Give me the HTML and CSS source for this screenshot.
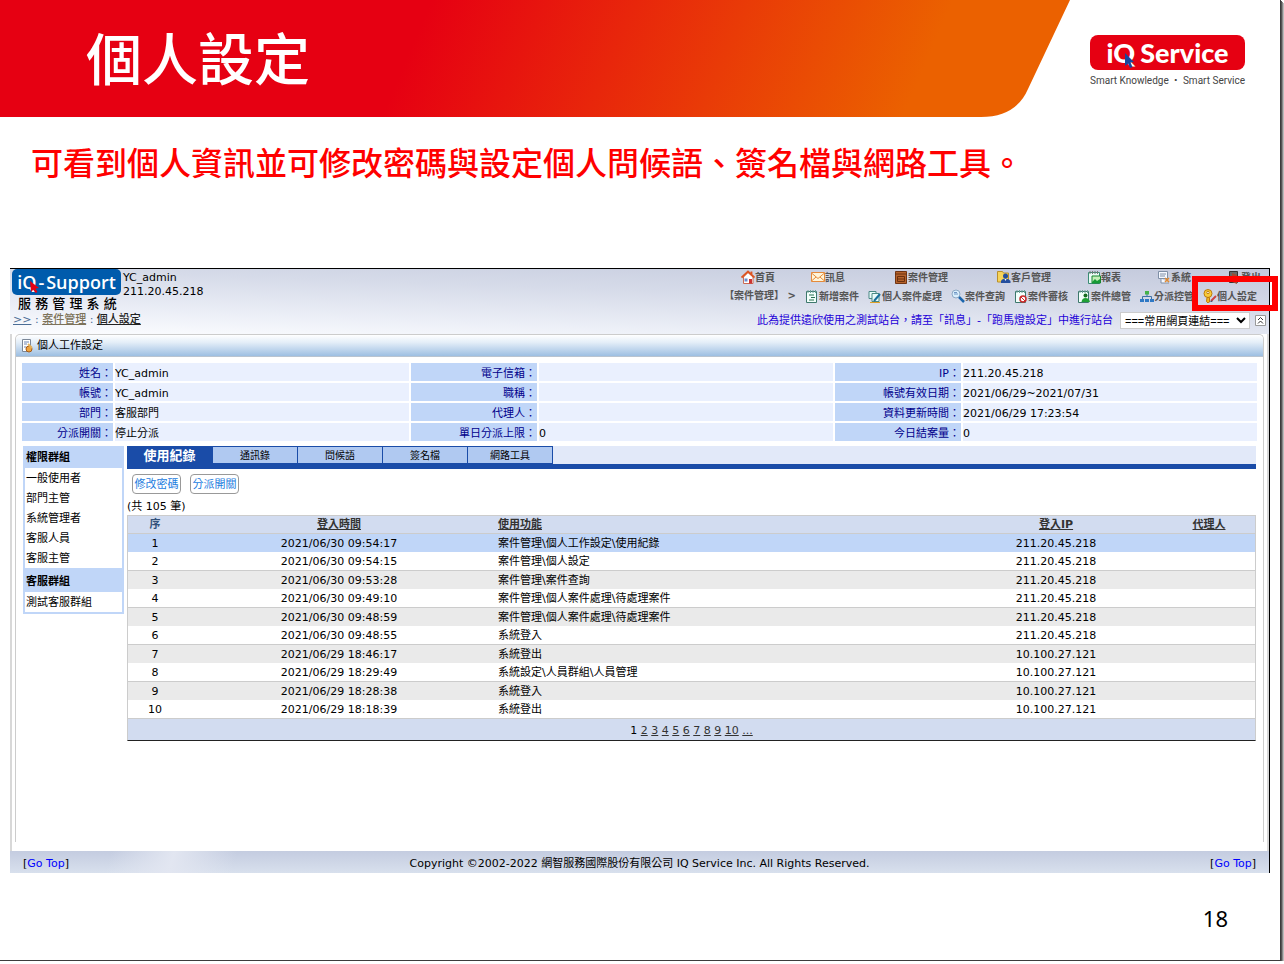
FILE: index.html
```html
<!DOCTYPE html>
<html lang="zh-Hant">
<head>
<meta charset="utf-8">
<meta name="viewport" content="width=device-width, initial-scale=1">
<title>個人設定</title>
<link rel="stylesheet" href="styles.css">
</head>
<body>
<main class="slide">
  <header class="slide-header">
    <div class="banner">
      <svg class="banner-shape" viewBox="0 0 1070 117" preserveAspectRatio="none" aria-hidden="true">
        <defs>
          <linearGradient id="bannerFill" gradientUnits="userSpaceOnUse" x1="410" y1="50" x2="850" y2="240">
            <stop offset="0" stop-color="#e60012"/>
            <stop offset="1" stop-color="#eb6100"/>
          </linearGradient>
        </defs>
        <path d="M0 0H1070L1028 89Q1016 117 981 117H0Z" fill="url(#bannerFill)"/>
      </svg>
      <h1 class="title">個人設定</h1>
    </div>
    <div class="brand">
      <div class="brand-mark">
        <span>iQ</span><span>Service</span>
        <svg class="brand-cursor" viewBox="0 0 9 15" aria-hidden="true"><path d="M0 0L9 9L5.500 9.500L7.500 14L5 15L3.200 10.500L0 13Z" fill="#17479e"/></svg>
      </div>
      <div class="brand-tag"><span>Smart Knowledge</span><span>・</span><span>Smart Service</span></div>
    </div>
  </header>

  <p class="lead">可看到個人資訊並可修改密碼與設定個人問候語、簽名檔與網路工具。</p>

  <section class="app">
    <header class="app-header">
      <div class="identity">
        <div class="app-logo-row">
          <div class="app-logo">
            <span>iQ</span><span>-</span><span>Support</span>
            <svg class="logo-cursor" viewBox="0 0 9 12" aria-hidden="true"><path d="M0 0L9 7L5.500 7.500L7.500 11L5.500 12L3.500 8.500L1 11Z" fill="#e60012"/></svg>
          </div>
          <div class="user"><div>YC_admin</div><div>211.20.45.218</div></div>
        </div>
        <div class="system-name">服 務 管 理 系 統</div>
        <nav class="crumbs"><a href="#">&gt;&gt;</a> : <a class="crumb-mid" href="#">案件管理</a> : <a class="crumb-here" href="#">個人設定</a></nav>
      </div>

      <div class="menus">
        <nav class="menu menu-main">
          <a href="#"><svg viewBox="0 0 14 14"><path d="M2.500 7V13.500H12V7L7 2.500Z" fill="#fff" stroke="#c96b55"/><path d="M.5 7.500L7 1.500L13.500 7.500M10.500 1.500V4" fill="none" stroke="#dd5522" stroke-width="1.800"/><path d="M8 9h3v4.500H8z" fill="#c33"/><path d="M3.500 8.500h3v3h-3z" fill="#678ed0"/></svg>首頁</a>
          <a href="#"><svg viewBox="0 0 14 14"><path d="M.5 2.500h13v9H.5z" fill="#fff4d8" stroke="#e58a3c"/><path d="M.5 3L7 8.500L13.500 3M.5 11L5 7M13.500 11L9 7" fill="none" stroke="#e58a3c"/></svg>訊息</a>
          <a class="wide" href="#"><svg viewBox="0 0 14 14"><path d="M1.500 1.500h11v12h-11z" fill="#b5622b" stroke="#713513"/><path d="M1 4h12M3.500 6.500h7v5h-7zM3.500 9h7M6 1.500h3" fill="none" stroke="#6b300e"/></svg>案件管理</a>
          <a class="wide" href="#"><svg viewBox="0 0 14 14"><path d="M.5 1.500h5l1 1.500h5v9H.5z" fill="#f6d45a" stroke="#ba902a"/><circle cx="8.500" cy="6" r="2.500" fill="#244f9e"/><path d="M4 13v-2q1-2.500 4.500-2.500t5 2.500v2z" fill="#244f9e"/><path d="M7.500 9l1 2 1-2z" fill="#fff"/></svg>客戶管理</a>
          <a href="#"><svg viewBox="0 0 14 14"><path d="M1.500 2.500h11v11h-11z" fill="#e9fbf4" stroke="#3a8c74"/><path d="M3 1v3M5.500 1v3M8 1v3M10.500 1v3" stroke="#777"/><path d="M5 6h8.500v7H5z" fill="#c4efb8" stroke="#16852e"/><path d="M5 12l3-3 2 2 3-2v4H5z" fill="#169b36"/></svg>報表</a>
          <a href="#"><svg viewBox="0 0 14 14"><path d="M1.500 1.500h9v7h-9zM4 8.500V13h8M3 4h6M3 6h5" fill="#f5f8ff" stroke="#7f8fa6"/><path d="M8 8l4 4M12 8l-4 4" stroke="#e28b30" stroke-width="1.500"/></svg>系統</a>
          <a href="#"><svg viewBox="0 0 14 14"><path d="M2.500 1.500h8v11h-8z" fill="#666" stroke="#333"/><path d="M5 3l5 2v9l-5-2z" fill="#a04b35"/><path d="M10 8h3" stroke="#333" stroke-width="2"/></svg>登出</a>
        </nav>
        <nav class="menu menu-sub">
          <span class="section-name">【案件管理】 &gt;</span>
          <a href="#"><svg viewBox="0 0 14 14"><path d="M1.500 2.500h10v11h-10z" fill="#f3fffb" stroke="#3d786c"/><path d="M3 1v3M5.500 1v3M8 1v3M10.500 1v3" stroke="#6e9f98"/><path d="M4 6h5M6 8.500h4M4 11h5" stroke="#287050"/></svg>新增案件</a>
          <a href="#"><svg viewBox="0 0 14 14"><path d="M1 2.500h7v7H1z" fill="#e9fbfa" stroke="#4a8984"/><path d="M4 4.500h7v8H4z" fill="#e9fbfa" stroke="#4a8984"/><path d="M6 12l6-7" stroke="#176f9b" stroke-width="2"/><path d="M2 13.500h10" stroke="#e0a028"/></svg>個人案件處理</a>
          <a href="#"><svg viewBox="0 0 14 14"><circle cx="5" cy="5" r="4" fill="#d9eefc" stroke="#8da9c4"/><path d="M3 5h4M3 3.500h3" stroke="#6f96c4"/><path d="M8 8l5 5" stroke="#1c66ad" stroke-width="2.500"/></svg>案件查詢</a>
          <a href="#"><svg viewBox="0 0 14 14"><path d="M1.500 2.500h10v11h-10z" fill="#f3fffb" stroke="#3d786c"/><path d="M3 1v3M5.500 1v3M8 1v3M10.500 1v3" stroke="#6e9f98"/><circle cx="9" cy="10" r="3" fill="#fff" stroke="#c92a2a" stroke-width="1.500"/><path d="M7 8l4 4" stroke="#c92a2a"/></svg>案件審核</a>
          <a href="#"><svg viewBox="0 0 14 14"><path d="M1.500 2.500h10v11h-10z" fill="#f3fffb" stroke="#3d786c"/><path d="M3 1v3M5.500 1v3M8 1v3M10.500 1v3" stroke="#6e9f98"/><circle cx="8.500" cy="6.500" r="2" fill="#176b20"/><path d="M4.500 13q.5-4 4-4t4.500 4z" fill="#20a035"/></svg>案件總管</a>
          <a href="#"><svg viewBox="0 0 14 14"><path d="M7 5v3M2.500 10V7.500h9V10" fill="none" stroke="#3f73a5"/><path d="M5 2h4v3.500H5z" fill="#45b248"/><path d="M0 10h4v3H0zM5 10h4v3H5zM10 10h4v3h-4z" fill="#2f79c5"/></svg>分派控管</a>
          <a class="marked" href="#"><svg viewBox="0 0 14 14"><circle cx="5" cy="4.500" r="4" fill="#f8cc38" stroke="#bd7a0c"/><circle cx="5" cy="3.500" r="1.200" fill="#fff" stroke="#bd7a0c"/><path d="M4 8.500h2.500V13l-1.500 1-1.500-1.500z" fill="#f3b720" stroke="#bd7a0c"/><path d="M8 12l5-5" stroke="#c44" stroke-width="2"/><path d="M7.500 12.500l2-.5" stroke="#246"/></svg>個人設定</a>
        </nav>
        <div class="quick">
          <span class="notice">此為提供遠欣使用之測試站台，請至「訊息」-「跑馬燈設定」中進行站台</span>
          <select class="quick-links" aria-label="常用網頁連結"><option>===常用網頁連結===</option></select>
          <button class="collapse" type="button" aria-label="收合"><svg viewBox="0 0 11 11"><path d="M.5.5h10v10H.5z" fill="#fff" stroke="#999"/><path d="M3 5l2.500-2.500L8 5M3 8.500L5.500 6L8 8.500" fill="none" stroke="#333"/></svg></button>
        </div>
      </div>
    </header>

    <div class="app-body">
      <section class="panel">
        <h2 class="panel-title"><svg viewBox="0 0 14 14" aria-hidden="true"><path d="M2.500.5h8v12h-8z" fill="#fff" stroke="#7b8798"/><path d="M4 3h5M4 5h3M4 8h2" stroke="#6a85b5"/><circle cx="9" cy="10" r="3" fill="#f0a43e" stroke="#a45b19"/><path d="M8 5l4 4" stroke="#e2b25e" stroke-width="2"/></svg>個人工作設定</h2>
        <div class="panel-content">
          <table class="info">
            <colgroup><col class="c-first"><col><col class="c-label"><col><col class="c-label"><col></colgroup>
            <tbody>
              <tr><th scope="row">姓名：</th><td>YC_admin</td><th scope="row">電子信箱：</th><td></td><th scope="row">IP：</th><td>211.20.45.218</td></tr>
              <tr><th scope="row">帳號：</th><td>YC_admin</td><th scope="row">職稱：</th><td></td><th scope="row">帳號有效日期：</th><td>2021/06/29~2021/07/31</td></tr>
              <tr><th scope="row">部門：</th><td>客服部門</td><th scope="row">代理人：</th><td></td><th scope="row">資料更新時間：</th><td>2021/06/29 17:23:54</td></tr>
              <tr><th scope="row">分派開關：</th><td>停止分派</td><th scope="row">單日分派上限：</th><td>0</td><th scope="row">今日結案量：</th><td>0</td></tr>
            </tbody>
          </table>

          <div class="columns">
            <aside class="groups">
              <h3>權限群組</h3>
              <ul><li>一般使用者</li><li>部門主管</li><li>系統管理者</li><li>客服人員</li><li>客服主管</li></ul>
              <h3>客服群組</h3>
              <ul><li>測試客服群組</li></ul>
            </aside>

            <div class="records">
              <div class="tabs" role="tablist">
                <button class="tab active" type="button" role="tab" aria-selected="true">使用紀錄</button>
                <button class="tab" type="button" role="tab">通訊錄</button>
                <button class="tab" type="button" role="tab">問候語</button>
                <button class="tab" type="button" role="tab">簽名檔</button>
                <button class="tab" type="button" role="tab">網路工具</button>
              </div>
              <div class="actions"><button type="button">修改密碼</button><button type="button">分派開關</button></div>
              <p class="count">(共 105 筆)</p>
              <table class="log">
                <colgroup><col class="c-no"><col class="c-time"><col><col class="c-ip"><col class="c-agent"></colgroup>
                <thead><tr><th class="no">序</th><th><a href="#">登入時間</a></th><th class="func"><a href="#">使用功能</a></th><th><a href="#">登入IP</a></th><th><a href="#">代理人</a></th></tr></thead>
                <tbody>
                  <tr class="selected"><td>1</td><td>2021/06/30 09:54:17</td><td class="func">案件管理\個人工作設定\使用紀錄</td><td>211.20.45.218</td><td></td></tr>
                  <tr><td>2</td><td>2021/06/30 09:54:15</td><td class="func">案件管理\個人設定</td><td>211.20.45.218</td><td></td></tr>
                  <tr><td>3</td><td>2021/06/30 09:53:28</td><td class="func">案件管理\案件查詢</td><td>211.20.45.218</td><td></td></tr>
                  <tr><td>4</td><td>2021/06/30 09:49:10</td><td class="func">案件管理\個人案件處理\待處理案件</td><td>211.20.45.218</td><td></td></tr>
                  <tr><td>5</td><td>2021/06/30 09:48:59</td><td class="func">案件管理\個人案件處理\待處理案件</td><td>211.20.45.218</td><td></td></tr>
                  <tr><td>6</td><td>2021/06/30 09:48:55</td><td class="func">系統登入</td><td>211.20.45.218</td><td></td></tr>
                  <tr><td>7</td><td>2021/06/29 18:46:17</td><td class="func">系統登出</td><td>10.100.27.121</td><td></td></tr>
                  <tr><td>8</td><td>2021/06/29 18:29:49</td><td class="func">系統設定\人員群組\人員管理</td><td>10.100.27.121</td><td></td></tr>
                  <tr><td>9</td><td>2021/06/29 18:28:38</td><td class="func">系統登入</td><td>10.100.27.121</td><td></td></tr>
                  <tr><td>10</td><td>2021/06/29 18:18:39</td><td class="func">系統登出</td><td>10.100.27.121</td><td></td></tr>
                </tbody>
                <tfoot><tr><td colspan="5">1 <a href="#">2</a> <a href="#">3</a> <a href="#">4</a> <a href="#">5</a> <a href="#">6</a> <a href="#">7</a> <a href="#">8</a> <a href="#">9</a> <a href="#">10</a> <a href="#">...</a></td></tr></tfoot>
              </table>
            </div>
          </div>
        </div>
      </section>
    </div>

    <footer class="app-footer">
      <span>[<a href="#">Go Top</a>]</span>
      <span>Copyright ©2002-2022 網智服務國際股份有限公司 IQ Service Inc. All Rights Reserved.</span>
      <span>[<a href="#">Go Top</a>]</span>
    </footer>
  </section>

  <div class="page-number">18</div>
</main>
</body>
</html>
```
FILE: styles.css
```css
* { box-sizing: border-box; }

body {
  margin: 0;
  background: #fff;
  color: #000;
  font-family: "DejaVu Sans", "Noto Sans CJK TC", sans-serif;
  font-size: 11px;
  line-height: 14px;
}

h1, h2, h3, p, ul { margin: 0; padding: 0; }
ul { list-style: none; }
button, select { font-family: inherit; color: inherit; }

.slide {
  display: flex;
  flex-direction: column;
  min-height: calc(100vh - 3px);
  margin-right: 3px;
  background: #fff;
  border-right: 1px solid #3c3c3c;
  border-bottom: 1px solid #3c3c3c;
  box-shadow: 1px 1px 0 #555, 2px 2px 0 #888, 3px 3px 0 #bbb;
}

/* Slide heading */
.slide-header { display: flex; }
.banner {
  position: relative;
  display: flex;
  flex: 1;
  align-items: flex-start;
  height: 117px;
  padding-left: 86px;
}
.banner-shape { position: absolute; inset: 0; width: 100%; height: 100%; }
.title {
  position: relative;
  color: #fff;
  font-family: "Noto Sans CJK TC", sans-serif;
  font-size: 56px;
  font-weight: 500;
  line-height: 112px;
}
.brand { width: 210px; padding: 35px 35px 0 20px; }
.brand-mark {
  position: relative;
  display: flex;
  justify-content: center;
  gap: 5px;
  height: 35px;
  border-radius: 8px;
  background: #e60012;
  color: #fff;
  font-family: Lato, sans-serif;
  font-size: 27px;
  font-weight: 900;
  line-height: 35px;
}
.brand-cursor { position: absolute; left: 35px; top: 18px; width: 9px; height: 15px; }
.brand-tag {
  display: flex;
  justify-content: space-between;
  padding-top: 4px;
  color: #444;
  font-family: Roboto, "Noto Sans CJK TC", sans-serif;
  font-size: 10px;
  white-space: nowrap;
}
.lead {
  padding: 20px 31px 83px;
  color: #f00;
  font-family: "Noto Sans CJK TC", sans-serif;
  font-size: 32px;
  font-weight: 500;
  line-height: 48px;
}

/* Application window */
.app {
  margin: 0 10px;
  border-top: 1px solid #000;
  border-right: 1px solid #000;
}
.app-header {
  display: flex;
  justify-content: space-between;
  height: 65px;
  background: linear-gradient(178deg, #fcfdff 0%, #eaedf6 35%, #d3d8e7 70%, #c3c9dc 100%);
  background: linear-gradient(182deg, #c3c9dc 0%, #d6dbe9 40%, #eceff7 75%, #fcfdff 100%);
}
.identity { padding-left: 2px; white-space: nowrap; }
.app-logo-row { display: flex; gap: 2px; }
.app-logo {
  position: relative;
  display: flex;
  align-items: center;
  justify-content: center;
  gap: 2px;
  width: 109px;
  height: 26px;
  border-radius: 5px;
  background: #005bac;
  color: #fff;
  font-family: "Open Sans", sans-serif;
  font-size: 18px;
  font-weight: 600;
}
.logo-cursor { position: absolute; left: 18px; top: 12px; width: 9px; height: 12px; }
.user { height: 26px; padding-top: 2px; }
.system-name { padding-left: 6px; font-size: 13px; font-weight: 500; line-height: 18px; }
.crumbs { padding-left: 1px; color: #4b6d96; line-height: 14px; font-weight: 500; }
.crumbs a { color: #4b6d96; }
.crumbs .crumb-mid { color: #7c725a; }
.crumbs .crumb-here { color: #222; }

.menus { display: flex; flex-direction: column; white-space: nowrap; }
.menu {
  display: flex;
  align-items: center;
  justify-content: flex-end;
  color: #555;
  font-family: "Noto Sans CJK TC", sans-serif;
  font-size: 10px;
  font-weight: 700;
}
.menu a { display: flex; align-items: center; color: inherit; text-decoration: none; }
.menu svg { width: 14px; height: 14px; }
.menu-main { gap: 36px; height: 16px; padding-right: 8px; }
.menu-main .wide { margin-left: 13px; }
.menu-sub { gap: 9px; height: 22px; padding-right: 12px; }
.section-name { font-family: "DejaVu Sans", "Noto Sans CJK TC", sans-serif; }
.marked { position: relative; }
.marked::after {
  content: "";
  position: absolute;
  inset: -13px -21px -8px -11px;
  border: 6px solid #f00;
}
.quick { display: flex; align-items: center; justify-content: flex-end; height: 27px; padding-right: 3px; }
.notice { margin-right: 7px; color: #2200d8; }
.quick-links {
  width: 130px;
  height: 17px;
  padding: 0;
  border: 1px solid #ccc;
  background: #fff;
  color: #000;
  font-family: "Liberation Sans", "Noto Sans CJK TC", sans-serif;
  font-size: 11px;
}
.collapse { display: flex; margin-left: 5px; padding: 0; border: 0; background: none; }
.collapse svg { width: 11px; height: 11px; }

.app-body {
  padding: 0 3px 9px;
  border: solid #d8d8d8;
  border-width: 0 2px;
}
.panel {
  min-height: 508px;
  border: 1px solid #ccc;
  border-bottom: 0;
  border-radius: 5px 5px 0 0;
}
.panel-title {
  display: flex;
  align-items: center;
  gap: 3px;
  height: 22px;
  padding-left: 4px;
  border-bottom: 1px solid #b9c4d0;
  border-radius: 5px 5px 0 0;
  background: linear-gradient(#fff, #e4eef8 35%, #9dbfe2);
  font-size: 11px;
  font-weight: 400;
}
.panel-title svg { width: 14px; height: 14px; }
.panel-content { padding: 4px 4px 0; }

.info { width: 100%; table-layout: fixed; border-spacing: 2px; }
.info th, .info td { height: 18px; padding: 3px 0 0; }
.info th { padding-right: 1px; background: #c0d6f8; color: #00008b; font-weight: 400; text-align: right; }
.info td { background: #eaf0fe; }
.c-first { width: 91px; }
.c-label { width: 126px; }

.columns { display: flex; align-items: flex-start; gap: 3px; padding: 3px 3px 0; }
.groups { width: 101px; border: 2px solid #c0d6f8; border-top: 0; background: #c0d6f8; }
.groups h3 { padding: 2px 1px 0; font-size: 11px; font-weight: 700; line-height: 20px; }
.groups ul { background: #fff; }
.groups li { height: 20px; padding: 1px 0 0 1px; line-height: 20px; }
.groups ul + h3 { padding-top: 4px; }

.records { flex: 1; }
.tabs { display: flex; height: 23px; border-bottom: 5px solid #1a4ca8; background: #e2e9f9; }
.tab {
  width: 85px;
  padding: 1px 0 0;
  border: 1px solid #1a4ca8;
  border-left: 0;
  background: #b0c9f1;
  font-size: 10px;
  line-height: 14px;
}
.tab.active { width: 86px; background: #1a4ca8; color: #fff; font-size: 13px; font-weight: 700; }
.actions { display: flex; gap: 9px; padding: 5px 5px 0; }
.actions button {
  width: 49px;
  height: 20px;
  padding: 1px 0 0;
  border: 1px solid #999;
  border-radius: 4px;
  background: #fff;
  color: #1c7ce0;
  font-size: 11px;
  line-height: 14px;
}
.count { padding: 6px 0 1px; }

.log {
  width: 100%;
  table-layout: fixed;
  border: 1px solid #ccc;
  border-bottom-color: #222;
  border-spacing: 0;
  text-align: center;
}
.log th, .log td { padding: 2px 0 0; }
.log th { height: 18px; padding-top: 0; border-bottom: 1px solid #ccc; background: #d2dcf0; color: #333; }
.log th.no { color: #33527a; }
.log a { color: #333; }
.log th.func, .log td.func { padding-left: 2px; text-align: left; }
.log tbody td { height: 18px; line-height: 14px; }
.log tbody tr:nth-child(even) td { height: 19px; border-bottom: 1px solid #ccc; }
.log tbody tr:nth-child(odd) td { background: #eaeaea; }
.log tbody tr.selected td { background: #c0d6f8; }
.log tfoot td { height: 21px; background: #d2dcf0; }
.c-no { width: 54px; }
.c-time { width: 314px; }
.c-ip { width: 214px; }
.c-agent { width: 92px; }

.app-footer {
  display: flex;
  align-items: center;
  justify-content: space-between;
  height: 22px;
  padding: 3px 13px 0;
  background: linear-gradient(105deg, transparent 8%, #e2e6f1 13%, transparent 18%), linear-gradient(#c4cce0, #d8e0ed);
}
.app-footer a { color: #00f; text-decoration: none; }

.page-number {
  padding: 30px 52px 0 0;
  font-family: "Noto Sans", sans-serif;
  font-size: 22px;
  line-height: 30px;
  text-align: right;
}
```
